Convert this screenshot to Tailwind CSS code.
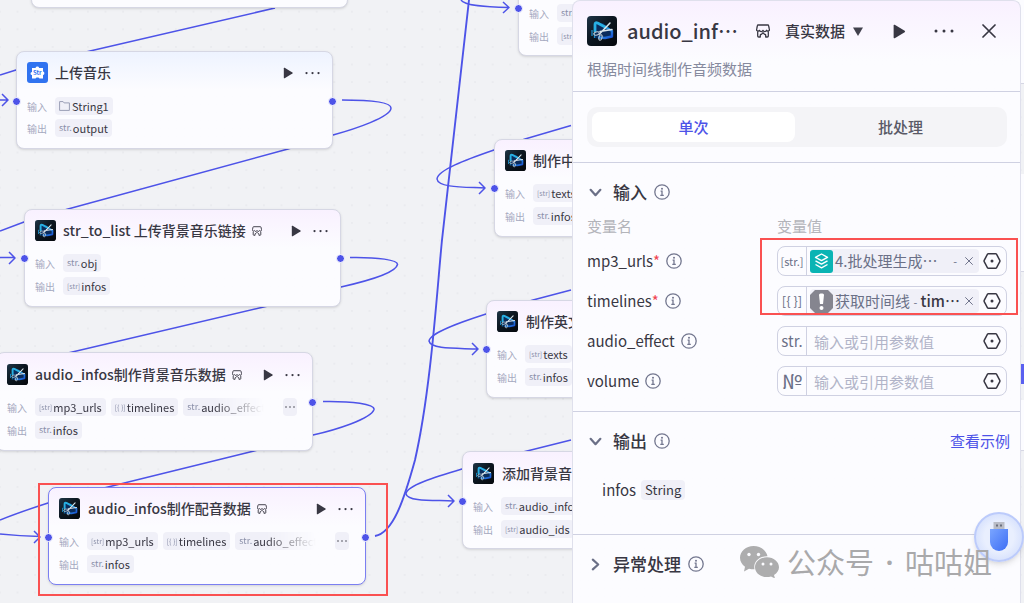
<!DOCTYPE html>
<html lang="zh-CN">
<head>
<meta charset="utf-8">
<title>工作流编辑器</title>
<script src="https://cdn.jsdelivr.net/npm/@tailwindcss/browser@4"></script>
</head>
<body class="font-['Noto_Sans_CJK_SC',sans-serif] text-[#383743]">

<!-- shared icons -->
<svg class="absolute size-0" aria-hidden="true">
  <defs>
    <linearGradient id="g-bg" x1="0" y1="0" x2="1" y2="1"><stop offset="0" stop-color="#1f3547"/><stop offset=".45" stop-color="#0c1620"/><stop offset="1" stop-color="#05080c"/></linearGradient>
    <linearGradient id="g-play" x1="0" y1="0" x2="1" y2="1"><stop offset="0" stop-color="#35c4f0"/><stop offset="1" stop-color="#1a4fd0"/></linearGradient>
    <linearGradient id="g-usb" x1="0" y1="0" x2="1" y2="1"><stop offset="0" stop-color="#7aa5ff"/><stop offset="1" stop-color="#3d6ef5"/></linearGradient>
  </defs>
  <symbol id="i-app" viewBox="0 0 30 30">
    <rect width="30" height="30" rx="4" fill="url(#g-bg)"/>
    <path d="M9 7.500 16 7l9 7.500v5l-9 3.500-8-1Z" fill="#0b2c5c"/>
    <path d="M8 16V8.500q0-2.500 2.500-1.500L20 12" fill="none" stroke="#28b0e4" stroke-width="2.800" stroke-linejoin="round"/>
    <path d="m20 12 5 3v5.500L18 22l-7-.5" fill="none" stroke="url(#g-play)" stroke-width="2.400" stroke-linejoin="round"/>
    <path d="M5 14v6M7.500 17v5" stroke="#1c8ac6" stroke-width="1.300"/>
    <path d="M23 7 12.500 18M25 13.500 13 15.500" stroke="#dbe6ec" stroke-width="1.500" stroke-linecap="round"/>
    <ellipse cx="9.500" cy="17.500" rx="2.800" ry="1.600" fill="none" stroke="#c3ced6" stroke-width="1" transform="rotate(-15 9.500 17.500)"/>
    <ellipse cx="13.500" cy="21.500" rx="1.500" ry="2.800" fill="none" stroke="#c3ced6" stroke-width="1" transform="rotate(15 13.500 21.500)"/>
  </symbol>
  <symbol id="i-store" viewBox="0 0 14 14">
    <path d="M2.200 1h9.600q.7 0 .8.700l.7 3.300a1.500 1.500 0 0 1-2.700 1.300 1.900 1.900 0 0 1-3.600 0 1.900 1.900 0 0 1-3.600 0A1.500 1.500 0 0 1 .7 5l.7-3.300q.1-.7.800-.7ZM1.700 7.800V12q0 1 1 1h1.600v-1.700q0-.8.700-.8.700 0 .9-.6.400-.9 1.100-.9t1.100.9q.2.600.9.600t.7.800V13h1.600q1 0 1-1V7.800" fill="none" stroke="currentColor" stroke-width="1.300" stroke-linejoin="round"/>
  </symbol>
  <symbol id="i-play" viewBox="0 0 12 14"><path d="M1 1.300q0-1 1-.5l9.300 5.500q.8.700 0 1.400L2 13.200q-1 .5-1-.5Z" fill="currentColor"/></symbol>
  <symbol id="i-more" viewBox="0 0 20 4"><circle cx="2" cy="2" r="1.500" fill="currentColor"/><circle cx="10" cy="2" r="1.500" fill="currentColor"/><circle cx="18" cy="2" r="1.500" fill="currentColor"/></symbol>
  <symbol id="i-info" viewBox="0 0 16 16"><circle cx="8" cy="8" r="7.200" fill="none" stroke="currentColor" stroke-width="1.300"/><circle cx="8" cy="4.700" r="1" fill="currentColor"/><path d="M6.600 7.200H8v4M6.300 11.300h3.500" fill="none" stroke="currentColor" stroke-width="1.300"/></symbol>
  <symbol id="i-hex" viewBox="0 0 18 18"><path d="M5.300 1.700h7.400q.5 0 .8.400l3.300 6.300q.3.600 0 1.200l-3.300 6.300q-.3.400-.8.400H5.300q-.5 0-.8-.4L1.200 9.600q-.3-.6 0-1.200l3.300-6.300q.3-.4.800-.4Z" fill="none" stroke="currentColor" stroke-width="1.500"/><circle cx="9" cy="9" r="1.500" fill="currentColor"/></symbol>
  <symbol id="i-x" viewBox="0 0 14 14"><path d="m1 1 12 12M13 1 1 13" stroke="currentColor" stroke-width="1.700" stroke-linecap="round"/></symbol>
  <symbol id="i-chev" viewBox="0 0 12 12"><path d="m1.500 3.500 4.500 5 4.500-5" fill="none" stroke="currentColor" stroke-width="2" stroke-linecap="round" stroke-linejoin="round"/></symbol>
</svg>

<main class="relative h-screen w-full overflow-hidden bg-[#f1f2f5]">

  <!-- grid and edges -->
  <svg class="absolute inset-0 size-full" aria-hidden="true">
    <defs><pattern id="dots" x="8.700" y="2.900" width="17.600" height="17.600" patternUnits="userSpaceOnUse"><circle cx="8.800" cy="8.800" r=".9" fill="#e7e8ec"/></pattern></defs>
    <rect width="100%" height="100%" fill="url(#dots)"/>
    <g fill="none" stroke="#4d53e8" stroke-width="1.500" stroke-linejoin="round">
      <path d="M275 8 90 51 16 70 0 75M0 100h8M2 94l6 6-6 6"/>
      <path d="M342 100C372 100 391 102 391 108 391 117 355 129 333 135L288 149 68 209 24 222 0 231M0 257.500h15M9 252l6 6-6 6"/>
      <path d="M350 257.500C378 257 398 260 397.500 264.500 396 273 363 282 341 287L268 306 68 353"/>
      <path d="M323 401.500C352 401 375 404 374 409.500 371 419 335 430 313 435L254 451 108 487 48 503Q20 512 0 520M0 534Q20 536 40 536.500M34 531l6 6-6 6"/>
      <path stroke-width="1.900" d="M375 536C393 533 404 500 415 460 431 390 437 290 442 240L469 0"/>
      <path d="M461 0C464 6 487 7 509 7.500M503 2l6 5.500-6 5.500"/>
      <path d="M571 125.500 525 139 494 150C465 160 438 170 437 179 438 188 466 187 485 188M479 182l6 6-6 6"/>
      <path d="M571 290 533 300 486 314C458 323 430 333 429 341 431 350 459 348 478 349M472 343l6 6-6 6"/>
      <path d="M571 440 523 452 462 469C435 477 406 486 406 494 408 502 436 500 453 501M448 495l6 6-6 6"/>
    </g>
  </svg>

  <!-- nodes on the canvas -->
  <div class="absolute -top-[90px] left-[31px] h-[98px] w-[317px] rounded-lg border border-[#d6d7e4] bg-[#fcfcff] shadow-sm"></div>

  <section class="absolute top-[51px] left-[16px] h-[98px] w-[317px] rounded-lg border border-[#d6d7e4] bg-[#fcfcff] bg-linear-to-b from-[#eef3ff] to-[#fcfcff] to-40% px-[10px] pt-[10px] shadow-sm">
    <header class="flex h-[21px] items-center pr-[2px]">
      <svg class="size-[21px]" viewBox="0 0 21 21" aria-hidden="true"><rect width="21" height="21" rx="3" fill="#3073f0"/><path d="M5 6h3.500a1.900 1.900 0 0 1 3.700 0H16v3.500a1.800 1.800 0 0 1 0 3.500v3.500h-3.500l-1-1h-2l-1 1H5V13a1.500 1.500 0 0 1 0-3Z" fill="#fff"/><text x="6" y="13" font-size="6" font-weight="700" fill="#3073f0">Str</text></svg>
      <h2 class="ml-[7px] text-sm leading-[19px] font-medium">上传音乐</h2>
      <button aria-label="运行" class="ml-auto"><svg class="h-[12px] w-[10px]"><use href="#i-play"/></svg></button>
      <button aria-label="更多" class="ml-[12px]"><svg class="h-[14px] w-[15px]"><use href="#i-more"/></svg></button>
    </header>
    <div class="mt-[14px] flex h-[18px] items-center text-[11px]"><span class="w-[28px] text-[10px] text-[#a5a9c0]">输入</span><span class="flex h-[18px] items-center gap-[2px] rounded bg-[#f0f0f8] px-1"><svg class="h-[10px] w-[11px] text-[#9a9eb5]" viewBox="0 0 11 10" aria-hidden="true"><path d="M.6.600h3.500l1 1.300h5.300v7.500H.6Z" fill="none" stroke="currentColor"/></svg>String1</span></div>
    <div class="mt-1 flex h-[18px] items-center text-[11px]"><span class="w-[28px] text-[10px] text-[#a5a9c0]">输出</span><span class="flex h-[18px] items-center gap-px rounded bg-[#f0f0f8] px-1"><i class="text-[9px] text-[#8a8fa8] not-italic">str.</i>output</span></div>
    <b class="absolute top-[45px] -left-[5px] size-[9px] rounded-full border border-white bg-[#4d53e8]"></b>
    <b class="absolute top-[45px] -right-[5px] size-[9px] rounded-full border border-white bg-[#4d53e8]"></b>
  </section>

  <section class="absolute top-[209px] left-[24px] h-[98px] w-[317px] rounded-lg border border-[#d6d7e4] bg-[#fcfcff] bg-linear-to-b from-[#f9f1ff] to-[#fcfcff] to-40% px-[10px] pt-[10px] shadow-sm">
    <header class="flex h-[21px] items-center pr-[2px]">
      <svg class="size-[21px]" aria-hidden="true"><use href="#i-app"/></svg>
      <h2 class="ml-[7px] text-sm leading-[19px] font-medium whitespace-nowrap">str_to_list 上传背景音乐链接</h2>
      <svg class="ml-[6px] size-[10px]" aria-hidden="true"><use href="#i-store"/></svg>
      <button aria-label="运行" class="ml-auto"><svg class="h-[12px] w-[10px]"><use href="#i-play"/></svg></button>
      <button aria-label="更多" class="ml-[12px]"><svg class="h-[14px] w-[15px]"><use href="#i-more"/></svg></button>
    </header>
    <div class="mt-[13px] flex h-[18px] items-center text-[11px]"><span class="w-[28px] text-[10px] text-[#a5a9c0]">输入</span><span class="flex h-[18px] items-center gap-px rounded bg-[#f0f0f8] px-1"><i class="text-[9px] text-[#8a8fa8] not-italic">str.</i>obj</span></div>
    <div class="mt-[5px] flex h-[18px] items-center text-[11px]"><span class="w-[28px] text-[10px] text-[#a5a9c0]">输出</span><span class="flex h-[18px] items-center gap-px rounded bg-[#f0f0f8] px-1"><i class="text-[7px] text-[#8a8fa8] not-italic">[str]</i>infos</span></div>
    <b class="absolute top-[44px] -left-[5px] size-[9px] rounded-full border border-white bg-[#4d53e8]"></b>
    <b class="absolute top-[44px] -right-[5px] size-[9px] rounded-full border border-white bg-[#4d53e8]"></b>
  </section>

  <section class="absolute top-[352px] -left-[4px] h-[99px] w-[317px] rounded-lg border border-[#d6d7e4] bg-[#fcfcff] bg-linear-to-b from-[#f9f1ff] to-[#fcfcff] to-40% px-[10px] pt-[11px] shadow-sm">
    <header class="flex h-[21px] items-center pr-[2px]">
      <svg class="size-[21px]" aria-hidden="true"><use href="#i-app"/></svg>
      <h2 class="ml-[7px] text-sm leading-[19px] font-medium whitespace-nowrap">audio_infos制作背景音乐数据</h2>
      <svg class="ml-[6px] size-[10px]" aria-hidden="true"><use href="#i-store"/></svg>
      <button aria-label="运行" class="ml-auto"><svg class="h-[12px] w-[10px]"><use href="#i-play"/></svg></button>
      <button aria-label="更多" class="ml-[12px]"><svg class="h-[14px] w-[15px]"><use href="#i-more"/></svg></button>
    </header>
    <div class="mt-[13px] flex h-[18px] items-center text-[11px]"><span class="w-[28px] shrink-0 text-[10px] text-[#a5a9c0]">输入</span>
      <div class="flex w-[236px] gap-[5px] overflow-hidden [mask-image:linear-gradient(to_right,#000_76%,transparent_97%)]">
        <span class="flex h-[18px] shrink-0 items-center gap-px rounded bg-[#f0f0f8] px-1"><i class="text-[7px] text-[#8a8fa8] not-italic">[str]</i>mp3_urls</span>
        <span class="flex h-[18px] shrink-0 items-center gap-px rounded bg-[#f0f0f8] px-1"><i class="text-[7px] text-[#8a8fa8] not-italic">[{ }]</i>timelines</span>
        <span class="flex h-[18px] shrink-0 items-center gap-px rounded bg-[#f0f0f8] pl-1"><i class="text-[9px] text-[#8a8fa8] not-italic">str.</i>audio_effect</span>
      </div>
      <button aria-label="更多变量" class="ml-[12px] flex h-[18px] w-[14px] items-center justify-center rounded bg-[#f0f0f8]"><svg class="h-[4px] w-[10px]"><use href="#i-more"/></svg></button>
    </div>
    <div class="mt-[5px] flex h-[18px] items-center text-[11px]"><span class="w-[28px] text-[10px] text-[#a5a9c0]">输出</span><span class="flex h-[18px] items-center gap-px rounded bg-[#f0f0f8] px-1"><i class="text-[9px] text-[#8a8fa8] not-italic">str.</i>infos</span></div>
    <b class="absolute top-[45px] -right-[5px] size-[9px] rounded-full border border-white bg-[#4d53e8]"></b>
  </section>

  <section class="absolute top-[487px] left-[48px] h-[98px] w-[318px] rounded-lg border border-[#7b7ff2] bg-[#fcfcff] bg-linear-to-b from-[#f9f1ff] to-[#fcfcff] to-40% px-[10px] pt-[10px] shadow-sm">
    <header class="flex h-[21px] items-center pr-[2px]">
      <svg class="size-[21px]" aria-hidden="true"><use href="#i-app"/></svg>
      <h2 class="ml-2 text-sm leading-[19px] font-medium whitespace-nowrap">audio_infos制作配音数据</h2>
      <svg class="ml-[6px] size-[10px]" aria-hidden="true"><use href="#i-store"/></svg>
      <button aria-label="运行" class="ml-auto"><svg class="h-[12px] w-[10px]"><use href="#i-play"/></svg></button>
      <button aria-label="更多" class="ml-[12px]"><svg class="h-[14px] w-[15px]"><use href="#i-more"/></svg></button>
    </header>
    <div class="mt-[13px] flex h-[18px] items-center text-[11px]"><span class="w-[28px] shrink-0 text-[10px] text-[#a5a9c0]">输入</span>
      <div class="flex w-[236px] gap-[5px] overflow-hidden [mask-image:linear-gradient(to_right,#000_76%,transparent_97%)]">
        <span class="flex h-[18px] shrink-0 items-center gap-px rounded bg-[#f0f0f8] px-1"><i class="text-[7px] text-[#8a8fa8] not-italic">[str]</i>mp3_urls</span>
        <span class="flex h-[18px] shrink-0 items-center gap-px rounded bg-[#f0f0f8] px-1"><i class="text-[7px] text-[#8a8fa8] not-italic">[{ }]</i>timelines</span>
        <span class="flex h-[18px] shrink-0 items-center gap-px rounded bg-[#f0f0f8] pl-1"><i class="text-[9px] text-[#8a8fa8] not-italic">str.</i>audio_effect</span>
      </div>
      <button aria-label="更多变量" class="ml-[12px] flex h-[18px] w-[14px] items-center justify-center rounded bg-[#f0f0f8]"><svg class="h-[4px] w-[10px]"><use href="#i-more"/></svg></button>
    </div>
    <div class="mt-[5px] flex h-[18px] items-center text-[11px]"><span class="w-[28px] text-[10px] text-[#a5a9c0]">输出</span><span class="flex h-[18px] items-center gap-px rounded bg-[#f0f0f8] px-1"><i class="text-[9px] text-[#8a8fa8] not-italic">str.</i>infos</span></div>
    <b class="absolute top-[45px] -left-[5px] size-[9px] rounded-full border border-white bg-[#4d53e8]"></b>
    <b class="absolute top-[45px] -right-[5px] size-[9px] rounded-full border border-white bg-[#4d53e8]"></b>
  </section>

  <section class="absolute -top-[42px] left-[518px] h-[98px] w-[317px] rounded-lg border border-[#d6d7e4] bg-[#fcfcff] px-[10px] pt-[45px] shadow-sm">
    <div class="flex h-[18px] items-center text-[11px]"><span class="w-[28px] text-[10px] text-[#a5a9c0]">输入</span><span class="flex h-[18px] items-center gap-px rounded bg-[#f0f0f8] px-1"><i class="text-[9px] text-[#8a8fa8] not-italic">str.</i>obj</span></div>
    <div class="mt-[5px] flex h-[18px] items-center text-[11px]"><span class="w-[28px] text-[10px] text-[#a5a9c0]">输出</span><span class="flex h-[18px] items-center gap-px rounded bg-[#f0f0f8] px-1"><i class="text-[7px] text-[#8a8fa8] not-italic">[str]</i>infos</span></div>
    <b class="absolute top-[45px] -left-[5px] size-[9px] rounded-full border border-white bg-[#4d53e8]"></b>
  </section>

  <section class="absolute top-[139px] left-[494px] h-[98px] w-[317px] rounded-lg border border-[#d6d7e4] bg-[#fcfcff] bg-linear-to-b from-[#f9f1ff] to-[#fcfcff] to-40% px-[10px] pt-[10px] shadow-sm">
    <header class="flex h-[21px] items-center">
      <svg class="size-[21px]" aria-hidden="true"><use href="#i-app"/></svg>
      <h2 class="ml-[7px] text-sm leading-[19px] font-medium whitespace-nowrap">制作中文</h2>
    </header>
    <div class="mt-[13px] flex h-[18px] items-center text-[11px]"><span class="w-[28px] text-[10px] text-[#a5a9c0]">输入</span><span class="flex h-[18px] items-center gap-px rounded bg-[#f0f0f8] px-1"><i class="text-[7px] text-[#8a8fa8] not-italic">[str]</i>texts</span></div>
    <div class="mt-[5px] flex h-[18px] items-center text-[11px]"><span class="w-[28px] text-[10px] text-[#a5a9c0]">输出</span><span class="flex h-[18px] items-center gap-px rounded bg-[#f0f0f8] px-1"><i class="text-[9px] text-[#8a8fa8] not-italic">str.</i>infos</span></div>
    <b class="absolute top-[44px] -left-[5px] size-[9px] rounded-full border border-white bg-[#4d53e8]"></b>
  </section>

  <section class="absolute top-[300px] left-[486px] h-[98px] w-[317px] rounded-lg border border-[#d6d7e4] bg-[#fcfcff] bg-linear-to-b from-[#f9f1ff] to-[#fcfcff] to-40% px-[10px] pt-[10px] shadow-sm">
    <header class="flex h-[21px] items-center">
      <svg class="size-[21px]" aria-hidden="true"><use href="#i-app"/></svg>
      <h2 class="ml-2 text-sm leading-[19px] font-medium whitespace-nowrap">制作英文</h2>
    </header>
    <div class="mt-[13px] flex h-[18px] items-center text-[11px]"><span class="w-[28px] text-[10px] text-[#a5a9c0]">输入</span><span class="flex h-[18px] items-center gap-px rounded bg-[#f0f0f8] px-1"><i class="text-[7px] text-[#8a8fa8] not-italic">[str]</i>texts</span></div>
    <div class="mt-[5px] flex h-[18px] items-center text-[11px]"><span class="w-[28px] text-[10px] text-[#a5a9c0]">输出</span><span class="flex h-[18px] items-center gap-px rounded bg-[#f0f0f8] px-1"><i class="text-[9px] text-[#8a8fa8] not-italic">str.</i>infos</span></div>
    <b class="absolute top-[44px] -left-[5px] size-[9px] rounded-full border border-white bg-[#4d53e8]"></b>
  </section>

  <section class="absolute top-[451px] left-[462px] h-[98px] w-[317px] rounded-lg border border-[#d6d7e4] bg-[#fcfcff] bg-linear-to-b from-[#f9f1ff] to-[#fcfcff] to-40% px-[10px] pt-[11px] shadow-sm">
    <header class="flex h-[21px] items-center">
      <svg class="size-[21px]" aria-hidden="true"><use href="#i-app"/></svg>
      <h2 class="ml-2 text-sm leading-[19px] font-medium whitespace-nowrap">添加背景音乐</h2>
    </header>
    <div class="mt-[13px] flex h-[18px] items-center text-[11px]"><span class="w-[28px] text-[10px] text-[#a5a9c0]">输入</span><span class="flex h-[18px] items-center gap-px rounded bg-[#f0f0f8] px-1"><i class="text-[9px] text-[#8a8fa8] not-italic">str.</i>audio_infos</span></div>
    <div class="mt-[5px] flex h-[18px] items-center text-[11px]"><span class="w-[28px] text-[10px] text-[#a5a9c0]">输出</span><span class="flex h-[18px] items-center gap-px rounded bg-[#f0f0f8] px-1"><i class="text-[7px] text-[#8a8fa8] not-italic">[str]</i>audio_ids</span></div>
    <b class="absolute top-[45px] -left-[5px] size-[9px] rounded-full border border-white bg-[#4d53e8]"></b>
  </section>

  <!-- parts of nodes that show beyond the panel -->
  <div class="absolute -top-[14px] right-0 h-[98px] w-[60px] border-b border-[#d6d7e4] bg-[#fcfcff]"></div>
  <div class="absolute top-[174px] right-0 h-[98px] w-[60px] border-b border-[#d6d7e4] bg-[#fcfcff]"></div>
  <div class="absolute top-[364px] right-0 h-[20px] w-[60px] bg-[#5a60f0]"></div>
  <div class="absolute top-[400px] right-0 h-[51px] w-[60px] border-b border-[#d6d7e4] bg-[#fcfcff]"></div>

  <!-- settings panel -->
  <aside class="absolute inset-y-0 right-[3px] flex w-[449px] flex-col rounded-t-lg border border-b-0 border-[#dfe0ec] bg-[#fcfcff] bg-linear-to-b from-[#f9f1ff] to-[#fcfcff] to-10%">
    <header class="border-b border-[#cfd1e2] pt-[15px] pr-[13px] pb-[11px] pl-[14px]">
      <div class="flex h-[30px] items-center">
        <svg class="size-[30px] shrink-0" aria-hidden="true"><use href="#i-app"/></svg>
        <h1 class="ml-[10px] text-xl font-medium whitespace-nowrap">audio_inf…</h1>
        <svg class="ml-[18px] size-[14px] shrink-0" aria-hidden="true"><use href="#i-store"/></svg>
        <button class="ml-[15px] flex items-center gap-2 text-[15px] font-medium whitespace-nowrap">真实数据<svg class="h-[9px] w-[10px]" viewBox="0 0 10 9" aria-hidden="true"><path d="M0 .500h10L5 9Z" fill="#41414d"/></svg></button>
        <button aria-label="运行" class="ml-auto"><svg class="h-[15px] w-[14px]"><use href="#i-play"/></svg></button>
        <button aria-label="更多" class="ml-[28px]"><svg class="h-[20px] w-[20px]"><use href="#i-more"/></svg></button>
        <button aria-label="关闭" class="mr-[11px] ml-[28px]"><svg class="size-[14px]"><use href="#i-x"/></svg></button>
      </div>
      <p class="mt-3 text-[15px] leading-[22px] text-[#868a9e]">根据时间线制作音频数据</p>
    </header>

    <div class="border-b border-[#cfd1e2] py-[15px] pr-[13px] pl-[14px]">
      <div class="grid h-10 grid-cols-2 gap-1 rounded-[10px] bg-[#f4f4f7] p-[5px] text-[15px] font-medium" role="tablist">
        <button role="tab" aria-selected="true" class="rounded-lg bg-white text-[#4d53e8]">单次</button>
        <button role="tab" aria-selected="false" class="text-[#595966]">批处理</button>
      </div>
    </div>

    <section class="border-b border-[#cfd1e2] pt-[17px] pr-[13px] pb-[15px] pl-[14px]">
      <h2 class="flex h-6 items-center text-[17px] font-medium"><button aria-label="收起输入" class="ml-[2px] text-[#6b7087]"><svg class="size-[13px]"><use href="#i-chev"/></svg></button><span class="ml-[11px]">输入</span><svg class="ml-[7px] size-4 text-[#73778f]" aria-hidden="true"><use href="#i-info"/></svg></h2>
      <div class="mt-3 grid grid-cols-[190px_minmax(0,1fr)] text-[15px] leading-[20px] text-[#b3b4ba]"><span>变量名</span><span>变量值</span></div>
      <div class="mt-[10px] flex flex-col gap-[10px] text-[15px]">
        <div class="grid h-[30px] grid-cols-[190px_minmax(0,1fr)] items-center">
          <span class="flex items-center">mp3_urls<em class="text-[#f04452] not-italic">*</em><svg class="ml-[6px] size-4 text-[#73778f]" aria-hidden="true"><use href="#i-info"/></svg></span>
          <div class="flex h-[30px] items-center rounded-lg border border-[#cfd1e2]">
            <span class="flex h-full w-[29px] shrink-0 items-center justify-center border-r border-[#cfd1e2] text-[11px] text-[#6b7087]">[str.]</span>
            <span class="ml-[3px] flex h-6 min-w-0 flex-1 items-center rounded bg-[#f0f0f8] text-[#6b7087]">
              <svg class="size-[23px] shrink-0" viewBox="0 0 23 23" aria-hidden="true"><rect width="23" height="23" rx="3" fill="#0ab4b4"/><path d="m11.500 4 6 3.300-6 3.300-6-3.300ZM5.500 10.800l6 3.300 6-3.300M5.500 14.500l6 3.300 6-3.300" fill="none" stroke="#fff" stroke-width="1.400" stroke-linejoin="round"/></svg>
              <span class="ml-[2px] whitespace-nowrap">4.批处理生成…</span><span class="ml-auto text-[11px]">-</span>
              <button aria-label="清除 mp3_urls" class="mr-[6px] ml-2"><svg class="size-[8px]"><use href="#i-x"/></svg></button>
            </span>
            <button aria-label="引用变量 mp3_urls" class="mr-[5px] ml-[4px]"><svg class="size-[18px]"><use href="#i-hex"/></svg></button>
          </div>
        </div>
        <div class="grid h-[30px] grid-cols-[190px_minmax(0,1fr)] items-center">
          <span class="flex items-center">timelines<em class="text-[#f04452] not-italic">*</em><svg class="ml-[6px] size-4 text-[#73778f]" aria-hidden="true"><use href="#i-info"/></svg></span>
          <div class="flex h-[30px] items-center rounded-lg border border-[#cfd1e2]">
            <span class="flex h-full w-[29px] shrink-0 items-center justify-center border-r border-[#cfd1e2] text-[13px] text-[#6b7087]">[{ }]</span>
            <span class="ml-[3px] flex h-6 min-w-0 flex-1 items-center rounded bg-[#f0f0f8] text-[#6b7087]">
              <svg class="size-[23px] shrink-0" viewBox="0 0 23 23" aria-hidden="true"><path d="M5 0h13l5 5v13l-5 5H5l-5-5V5Z" fill="#85858f"/><path d="M9 5q0-1.500 1.500-1.500h2Q14 3.500 14 5l-1 9h-3Z" fill="#fff"/><circle cx="11.500" cy="18" r="2" fill="#fff"/></svg>
              <span class="ml-[2px] whitespace-nowrap">获取时间线 <small class="text-[11px]">-</small> <span class="font-medium text-[#383743]">tim…</span></span>
              <button aria-label="清除 timelines" class="mr-[6px] ml-auto"><svg class="size-[8px]"><use href="#i-x"/></svg></button>
            </span>
            <button aria-label="引用变量 timelines" class="mr-[5px] ml-[4px]"><svg class="size-[18px]"><use href="#i-hex"/></svg></button>
          </div>
        </div>
        <div class="grid h-[30px] grid-cols-[190px_minmax(0,1fr)] items-center">
          <label for="f-effect" class="flex items-center">audio_effect<svg class="ml-[6px] size-4 text-[#73778f]" aria-hidden="true"><use href="#i-info"/></svg></label>
          <div class="flex h-[30px] items-center rounded-lg border border-[#cfd1e2]">
            <span class="flex h-full w-[29px] shrink-0 items-center justify-center border-r border-[#cfd1e2] text-[15px] text-[#6b7087]">str.</span>
            <input id="f-effect" placeholder="输入或引用参数值" class="h-full w-0 min-w-0 flex-1 px-[7px] outline-none placeholder:text-[#b1b4c8]">
            <button aria-label="引用变量 audio_effect" class="mr-[5px] ml-[4px]"><svg class="size-[18px]"><use href="#i-hex"/></svg></button>
          </div>
        </div>
        <div class="grid h-[30px] grid-cols-[190px_minmax(0,1fr)] items-center">
          <label for="f-volume" class="flex items-center">volume<svg class="ml-[6px] size-4 text-[#73778f]" aria-hidden="true"><use href="#i-info"/></svg></label>
          <div class="flex h-[30px] items-center rounded-lg border border-[#cfd1e2]">
            <span class="flex h-full w-[29px] shrink-0 items-center justify-center border-r border-[#cfd1e2] text-[20px] text-[#6b7087]">№</span>
            <input id="f-volume" placeholder="输入或引用参数值" class="h-full w-0 min-w-0 flex-1 px-[7px] outline-none placeholder:text-[#b1b4c8]">
            <button aria-label="引用变量 volume" class="mr-[5px] ml-[4px]"><svg class="size-[18px]"><use href="#i-hex"/></svg></button>
          </div>
        </div>
      </div>
    </section>

    <section class="border-b border-[#cfd1e2] pt-[17px] pr-[13px] pb-[34px] pl-[14px]">
      <div class="flex h-6 items-center">
        <h2 class="flex items-center text-[17px] font-medium"><button aria-label="收起输出" class="ml-[2px] text-[#6b7087]"><svg class="size-[13px]"><use href="#i-chev"/></svg></button><span class="ml-[11px]">输出</span><svg class="ml-[7px] size-4 text-[#73778f]" aria-hidden="true"><use href="#i-info"/></svg></h2>
        <a href="#" class="-mr-[3px] ml-auto text-[15px] text-[#4d53e8]">查看示例</a>
      </div>
      <div class="mt-[27px] ml-[15px] flex h-5 items-center gap-[5px] text-[15px]">infos<span class="rounded bg-[#f0f0f8] px-1 text-[13px] leading-5">String</span></div>
    </section>

    <section class="px-[14px] pt-[17px]">
      <h2 class="flex h-6 items-center text-[17px] font-medium"><button aria-label="展开异常处理" class="ml-[2px] text-[#6b7087]"><svg class="size-[13px] -rotate-90"><use href="#i-chev"/></svg></button><span class="ml-[11px]">异常处理</span><svg class="ml-[7px] size-4 text-[#73778f]" aria-hidden="true"><use href="#i-info"/></svg></h2>
    </section>
  </aside>

  <!-- assistant button -->
  <button aria-label="助手" class="absolute top-[512px] right-0 flex size-[50px] items-center justify-center rounded-full border-2 border-[#bccbfb] bg-[radial-gradient(circle,#e9effe_45%,#c8d6fc_100%)] shadow-md">
    <svg class="h-[30px] w-[20px]" viewBox="0 0 20 30" aria-hidden="true"><path d="M4.500 0h11v8h-11Z" fill="#b9bcc6"/><path d="M7 2.500h2v2H7ZM11 2.500h2v2h-2Z" fill="#6b6f7c"/><path d="M1 7h18v13a9 9 0 0 1-18 0Z" fill="url(#g-usb)"/></svg>
  </button>

  <!-- watermark -->
  <div class="pointer-events-none absolute top-[540px] right-[32px] flex h-11 items-center text-[29px] whitespace-nowrap text-[#a9a9ab]">
    <svg class="mr-[8px] h-[32px] w-[39px]" viewBox="0 0 39 32" aria-hidden="true"><path d="M13.500 0C6 0 0 5.200 0 11.800c0 3.600 2 6.900 5 9L4 25.500l5-2.800q2.200.6 5.500.6C13 16 19 10 27.500 10.300 26.500 4.300 20.500 0 13.500 0Z" fill="#adadae"/><path d="M27 11.300c-6.600 0-12 4.400-12 10s5.400 9.800 12 9.800q2 0 4-.6l4 2-1-3.500c3-1.800 5-4.600 5-7.700 0-5.600-5.400-10-12-10Z" fill="#adadae"/><g fill="#fcfcff"><circle cx="9" cy="8.500" r="1.700"/><circle cx="18.500" cy="8.500" r="1.700"/><circle cx="23" cy="18" r="1.500"/><circle cx="31" cy="18" r="1.500"/></g></svg>
    <span>公众号</span><span class="w-[31px] text-center font-['Noto_Sans',sans-serif] font-semibold">·</span><span>咕咕姐</span>
  </div>

  <!-- highlight frames -->
  <div class="pointer-events-none absolute top-[483px] left-[38px] h-[113px] w-[350px] border-2 border-[#fa5151]"></div>
  <div class="pointer-events-none absolute top-[238px] right-[6px] h-[77px] w-[258px] border-2 border-[#fa5151]"></div>
</main>
</body>
</html>
